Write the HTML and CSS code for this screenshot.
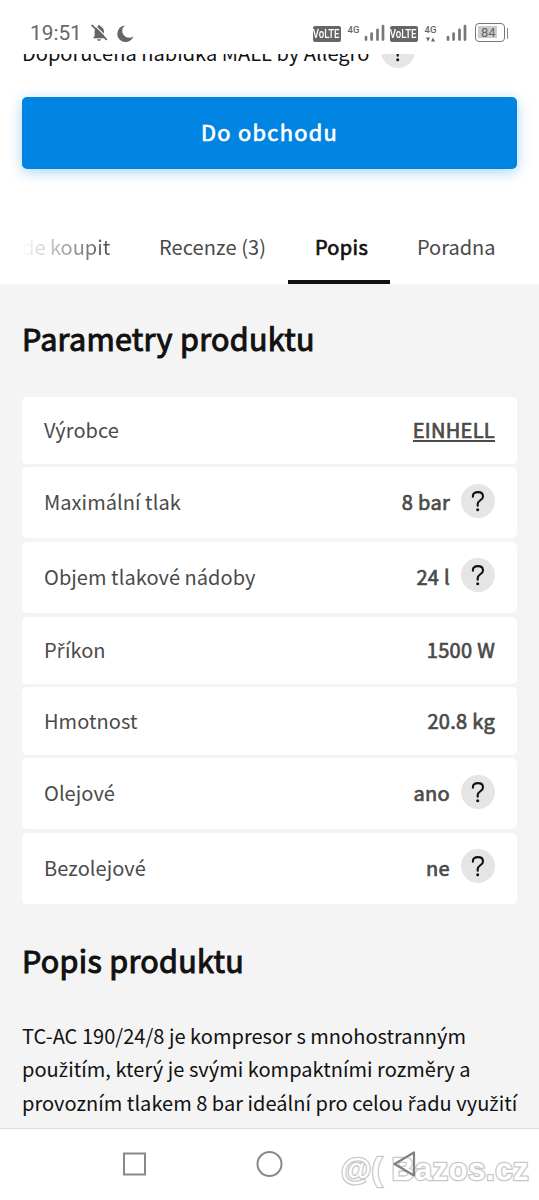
FILE: index.html
```html
<!DOCTYPE html>
<html lang="cs">
<head>
<meta charset="utf-8">
<title>Parametry produktu</title>
<link rel="stylesheet" href="styles.css">
</head>
<body>
<svg class="defs" width="0" height="0">
  <symbol id="signal" viewBox="0 0 21 18"><path d="M2 13.2V15.6M7.6 9.6V15.6M13.5 5.8V15.6M19 2V15.6" fill="none" stroke="#777" stroke-width="2.7" stroke-linecap="round"/></symbol>
  <symbol id="help" viewBox="0 0 34 34"><circle cx="17" cy="17" r="17" fill="#e5e5e5"/><path d="M11.9 12.8V12C11.9 9.5 13.9 8.1 16.9 8.1S22 9.8 22 12.4C22 16.2 16.7 16.3 16.7 20V21.8" fill="none" stroke="#111" stroke-width="2.1" stroke-linecap="round"/><circle cx="16.7" cy="25.8" r="1.5" fill="#111"/></symbol>
</svg>
<div class="screen">
  <header class="status">
    <span class="clock">19:51</span>
    <svg class="bell" width="17" height="18" viewBox="0 0 17 18"><path d="M2 14.2h13l-2-2.3V7.5C13 4.8 11.4 3 9.3 2.5V1.2H7v1.3C4.9 3 3.6 4.8 3.6 7.5v4.4zM6 15.2h4q-.5 1.8-2 1.8t-2-1.8z" fill="#666"/><path d="M1.4 -.8L17 14.4" stroke="#fff" stroke-width="1.2"/><path d="M.6 .8L15.8 15.8" stroke="#666" stroke-width="1.7"/></svg>
    <svg class="moon" width="17" height="17" viewBox="0 0 17 17"><path d="M7.8.5A8.3 8.3 0 1 0 16.5 11.2 6.8 6.8 0 0 1 7.8.5z" fill="#666"/></svg>
    <div class="radio">
      <span class="volte"><span>VoLTE</span></span>
      <span class="net">4G</span>
      <svg class="sig" width="21" height="18"><use href="#signal"/></svg>
      <span class="volte v2"><span>VoLTE</span></span>
      <span class="net n2">4G<svg width="9" height="5" viewBox="0 0 9 5"><path d="M0 .5h4L2 4.5zM5 4.5h4L7 .5z" fill="#666"/></svg></span>
      <svg class="sig s2" width="21" height="18"><use href="#signal"/></svg>
      <span class="battery"><span class="charge">84</span></span><i class="cap"></i>
    </div>
  </header>
  <section class="offer">
    <div class="recommend"><span>Doporu<i class="hk">č</i>ená nabídka MALL by Allegro</span><svg width="34" height="34"><use href="#help"/></svg></div>
    <a class="shop">Do obchodu</a>
  </section>
  <nav class="tabs">
    <a class="tab t1">de koupit</a>
    <a class="tab t2">Recenze (3)</a>
    <a class="tab t3">Popis</a>
    <a class="tab t4">Poradna</a>
  </nav>
  <main class="content">
    <h2>Parametry produktu</h2>
    <dl class="params">
      <div class="row"><dt>Výrobce</dt><dd><a class="brand">EINHELL</a></dd></div>
      <div class="row tall"><dt>Maximální tlak</dt><dd>8 bar<svg width="34" height="34"><use href="#help"/></svg></dd></div>
      <div class="row tall"><dt>Objem tlakové nádoby</dt><dd>24 l<svg width="34" height="34"><use href="#help"/></svg></dd></div>
      <div class="row"><dt>P<i class="hk">ř</i>íkon</dt><dd>1500 W</dd></div>
      <div class="row"><dt>Hmotnost</dt><dd>20.8 kg</dd></div>
      <div class="row tall"><dt>Olejové</dt><dd>ano<svg width="34" height="34"><use href="#help"/></svg></dd></div>
      <div class="row tall"><dt>Bezolejové</dt><dd>ne<svg width="34" height="34"><use href="#help"/></svg></dd></div>
    </dl>
    <h2 class="second">Popis produktu</h2>
    <p class="text">TC-AC 190/24/8 je kompresor s mnohostranným<br>pou<i class="hk">ž</i>itím, který je svými kompaktními rozměry a<br>provozním tlakem 8 bar ideální pro celou <i class="hk">ř</i>adu vyu<i class="hk">ž</i>ití<br>pou<i class="hk">ž</i>itné hodnoty pro domovy i zábavu mnoha stroj<i class="hk">ů</i></p>
  </main>
  <footer class="navbar">
    <svg class="keys" width="300" height="30" viewBox="120 0 300 30"><path d="M124 9.5h21v21h-21z" transform="translate(0 -5)" fill="none" stroke="#888" stroke-width="2"/><circle cx="269.5" cy="15" r="12" fill="none" stroke="#888" stroke-width="2"/></svg>
    <span class="watermark"><span>@(</span><span>Bazos.cz</span></span>
    <svg class="back" width="24" height="28" viewBox="0 0 24 28"><path d="M2.5 14L22 2.5v23z" fill="none" stroke="#808080" stroke-width="2.2" stroke-linejoin="round"/></svg>
  </footer>
</div>
</body>
</html>
```
FILE: styles.css
```css
* { box-sizing: border-box; }
body { margin: 0; background: #fff; font-family: "Noto Sans CJK SC", "Open Sans", sans-serif; font-size: 20px; color: #111; }
.defs { position: absolute; }
.screen { width: 539px; height: 1200px; overflow: hidden; display: flex; flex-direction: column; white-space: nowrap; }
.hk { font-family: "Open Sans", sans-serif; font-style: normal; line-height: 1; }
.status { height: 54px; flex: none; display: flex; align-items: flex-start; padding: 0 30px; font-family: Roboto, sans-serif; color: #666; background: #fff; }
.clock { font-size: 20.8px; line-height: 24px; margin-top: 21px; width: 51px; }
.bell { margin: 24px 0 0 10px; }
.moon { margin: 25px 0 0 9px; }
.radio { display: flex; align-items: flex-start; margin-left: auto; margin-right: 1px; }
.volte { margin-top: 26px; width: 28px; height: 16px; border-radius: 2px; background: #666; color: #fff; font: 500 13px/16px Roboto, sans-serif; display: flex; justify-content: center; }
.volte span { transform: scaleX(.74); }
.net { margin: 24px 0 0 7px; width: 12px; font: 500 9.5px/12px Roboto, sans-serif; display: flex; flex-direction: column; align-items: center; }
.net svg { margin-top: 1px; }
.sig { margin: 24px 0 0 4px; }
.v2 { margin-left: 5px; }
.n2 { margin-left: 7px; }
.s2 { margin-left: 9px; }
.battery { margin: 23px 0 0 8px; width: 30px; height: 19px; border: 1.5px solid #777; border-radius: 4px; padding: 2px; }
.charge { display: block; width: 19px; height: 12px; background: #ccc; font-size: 13px; line-height: 13px; text-align: right; color: #666; padding-right: 1px; }
.cap { width: 1.5px; height: 11px; background: #888; margin: 28px 0 0 2px; }
.offer { height: 156px; flex: none; padding: 0 22px; overflow: hidden; }
.recommend { height: 43px; display: flex; color: #111; line-height: 34px; }
.recommend span { margin-top: -18px; width: 359px; flex: none; letter-spacing: .03px; }
.recommend svg { margin: -20px 0 0; flex: none; }
.shop { display: block; height: 72px; border-radius: 5px; background: #0084e2; color: #fff; font-size: 21.8px; -webkit-text-stroke: .7px #fff; letter-spacing: 1.3px; line-height: 69px; text-align: center; box-shadow: 0 3px 14px rgba(0, 132, 226, .35); }
.tabs { height: 74px; flex: none; display: flex; padding-left: 22px; color: #4a4a4a; line-height: 73px; }
.t1 { width: 111px; background: linear-gradient(90deg, #fff, #4a4a4a 88px); background-clip: text; color: transparent; }
.t2 { width: 155px; padding-left: 26px; letter-spacing: .1px; }
.t3 { width: 102px; padding-left: 5px; color: #111; -webkit-text-stroke: .7px #111; letter-spacing: .35px; text-align: center; border-bottom: 4px solid #111; }
.t4 { padding-left: 27px; }
.content { background: #f4f4f4; flex: none; height: 845px; overflow: hidden; padding: 0 22px; border-bottom: 1px solid #ddd; }
h2 { margin: 0; font-size: 30.5px; line-height: 46px; font-weight: 400; -webkit-text-stroke: 1.05px #111; letter-spacing: .3px; padding-top: 31px; height: 112.5px; }
.params { margin: 0; display: flex; flex-direction: column; gap: 3.7px; color: #4a4a4a; letter-spacing: .05px; }
.row { height: 67.2px; background: #fff; border-radius: 5px; padding: 0 22px 1px; display: flex; justify-content: space-between; align-items: center; line-height: 30px; }
.tall { height: 70.9px; }
dd { margin: 0; -webkit-text-stroke: .7px #4a4a4a; letter-spacing: .3px; display: flex; align-items: center; }
dd svg { margin: -3px 0 0 11px; -webkit-text-stroke: 0; }
.brand { border-bottom: 2px solid #4a4a4a; line-height: 21px; margin-top: 1px; }
.second { padding-top: 33px; height: 115px; }
.text { margin: 0; line-height: 33.6px; letter-spacing: .03px; }
.navbar { height: 71px; display: flex; padding: 20px 0 0 120px; position: relative; }
.watermark { position: absolute; left: 341px; top: 22px; display: flex; gap: 9px; font: 700 31px/38px "Liberation Sans", sans-serif; letter-spacing: .6px; color: #fff; -webkit-text-stroke: 2.6px #c8c8c8; paint-order: stroke fill; }
.back { position: absolute; left: 392px; top: 21px; }
```
